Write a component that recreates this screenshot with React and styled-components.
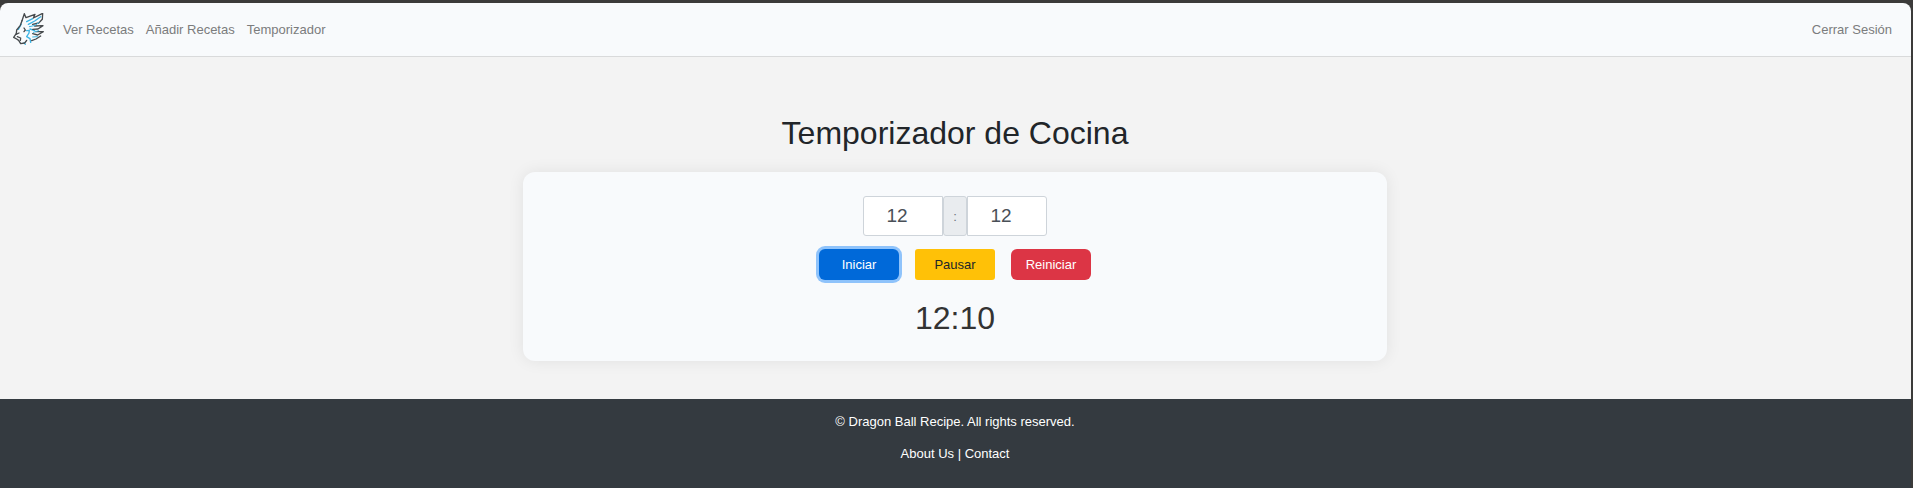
import React from "react";
import styled, { createGlobalStyle } from "styled-components";

const GlobalStyle = createGlobalStyle`
  *, *::before, *::after { box-sizing: border-box; }
  body {
    margin: 0;
    background: #3b3b3a;
    font-family: "Liberation Sans", Arial, sans-serif;
    font-size: 13px;
    line-height: 19px;
    color: #212529;
  }
`;

const Page = styled.div`
  display: flex;
  flex-direction: column;
  min-height: 100vh;
  padding: 3px 2px 0 0;
`;

const Navbar = styled.nav`
  display: flex;
  align-items: center;
  gap: 12px;
  padding: 6px 19px 6px 12px;
  background: #f8fafc;
  border-bottom: 1px solid #d9dadb;
  border-radius: 8px 8px 0 0;
`;

const Brand = styled.a`
  display: flex;
  padding: 4px 7px 5px 0;

  svg {
    width: 32px;
    height: 32px;
  }
`;

const NavLink = styled.a`
  color: #7b7c7d;
  text-decoration: none;
  margin-left: ${(p) => (p.$end ? "auto" : "0")};
`;

const Main = styled.main`
  display: flex;
  flex: 1;
  flex-direction: column;
  align-items: center;
  padding: 57px 17px 38px 16px;
  background: #f3f3f3;
`;

const Title = styled.h1`
  margin: 0 0 19px;
  font-size: 32px;
  font-weight: 400;
  line-height: 39px;
`;

const Card = styled.form`
  display: flex;
  flex-direction: column;
  align-items: center;
  width: 100%;
  max-width: 864px;
  padding: 24px 24px 23px;
  background: #f8fafc;
  border-radius: 12px;
  box-shadow: 0 0 16px rgba(0, 0, 0, 0.08);
`;

const TimeFields = styled.div`
  display: flex;
  margin-bottom: 13px;
`;

const TimeInput = styled.input`
  width: 80px;
  height: 40px;
  padding: 0 21px 0 9px;
  border: 1px solid #ced4da;
  border-radius: ${(p) => (p.$last ? "0 3px 3px 0" : "3px 0 0 3px")};
  background: #fff;
  color: #495057;
  font: 19px "Liberation Sans", Arial, sans-serif;
  text-align: center;
  appearance: textfield;

  &::-webkit-inner-spin-button {
    appearance: none;
    margin: 0;
  }
`;

const Separator = styled.span`
  display: flex;
  align-items: center;
  justify-content: center;
  width: 24px;
  border: 1px solid #ced4da;
  border-radius: 3px;
  background: #e9ecef;
  color: #6c757d;
`;

const Actions = styled.div`
  display: flex;
  gap: 16px;
  margin-bottom: 18px;
`;

const tones = {
  primary: "background: #0069d9; color: #fff; border-radius: 6px; box-shadow: 0 0 0 3px #8fc3fb;",
  warning: "background: #ffc107; color: #212529; border-radius: 3px;",
  danger: "background: #dc3545; color: #fff; border-radius: 6px;",
};

const Button = styled.button`
  width: 80px;
  height: 31px;
  padding: 0;
  border: 0;
  font: 13px "Liberation Sans", Arial, sans-serif;
  cursor: pointer;
  outline: none;
  ${(p) => tones[p.$tone]}
`;

const Remaining = styled.output`
  color: #333;
  font-size: 32px;
  line-height: 40px;
`;

const Footer = styled.footer`
  padding: 13px 17px 25px 16px;
  background: #343a40;
  color: #fff;
  text-align: center;

  p {
    margin: 0 0 13px;
  }

  a {
    color: #fff;
    text-decoration: none;
  }
`;

function Logo() {
  return (
    <svg viewBox="36 39 96 96" fill="none" strokeLinecap="round" strokeLinejoin="round" aria-hidden="true">
      <g stroke="#3cb4e4" strokeWidth="4">
        <path d="M80 65 L98 56 M85 73 L104 63 L122 50 M64 72 L55 88" />
        <path d="M80 92 L88 91 L87 99 L80 110 L90 116 L92 127 M90 87 L104 92 M72 128 L76 133" />
      </g>
      <g stroke="#45494c" strokeWidth="4">
        <path d="M66 62 L73 41 L78 53 L105 43 L100 54 L128 40 L127 58 L116 69 L98 73" />
        <path d="M66 62 L61 76 L50 90 L49 100 L41 112 L50 117 L56 121 L62 131 L74 129 L80 121" />
        <path d="M104 78 L129 77 L114 87 L98 88 M108 95 L130 95 L113 105 L98 101 M122 108 L108 117 L95 122" />
        <path d="M48 103 L57 99 M52 110 L62 114 L61 121 M72 84 L76 90 L72 95" />
      </g>
      <path d="M88 80 L106 76 L118 66 M100 97 L116 92 M98 111 L112 110" stroke="#3cb4e4" strokeWidth="3" />
    </svg>
  );
}

export default function App() {
  return (
    <>
      <GlobalStyle />
      <Page>
        <Navbar>
          <Brand href="#" aria-label="Dragon Ball Recipe">
            <Logo />
          </Brand>
          <NavLink href="#recetas">Ver Recetas</NavLink>
          <NavLink href="#nueva">Añadir Recetas</NavLink>
          <NavLink href="#temporizador">Temporizador</NavLink>
          <NavLink $end href="#salir">Cerrar Sesión</NavLink>
        </Navbar>
        <Main>
          <Title>Temporizador de Cocina</Title>
          <Card onSubmit={(e) => e.preventDefault()}>
            <TimeFields>
              <TimeInput type="number" aria-label="Minutos" defaultValue="12" />
              <Separator>:</Separator>
              <TimeInput $last type="number" aria-label="Segundos" defaultValue="12" />
            </TimeFields>
            <Actions>
              <Button type="button" $tone="primary">Iniciar</Button>
              <Button type="button" $tone="warning">Pausar</Button>
              <Button type="button" $tone="danger">Reiniciar</Button>
            </Actions>
            <Remaining>12:10</Remaining>
          </Card>
        </Main>
        <Footer>
          <p>© Dragon Ball Recipe. All rights reserved.</p>
          <p>
            <a href="#about">About Us</a> | <a href="#contact">Contact</a>
          </p>
        </Footer>
      </Page>
    </>
  );
}
